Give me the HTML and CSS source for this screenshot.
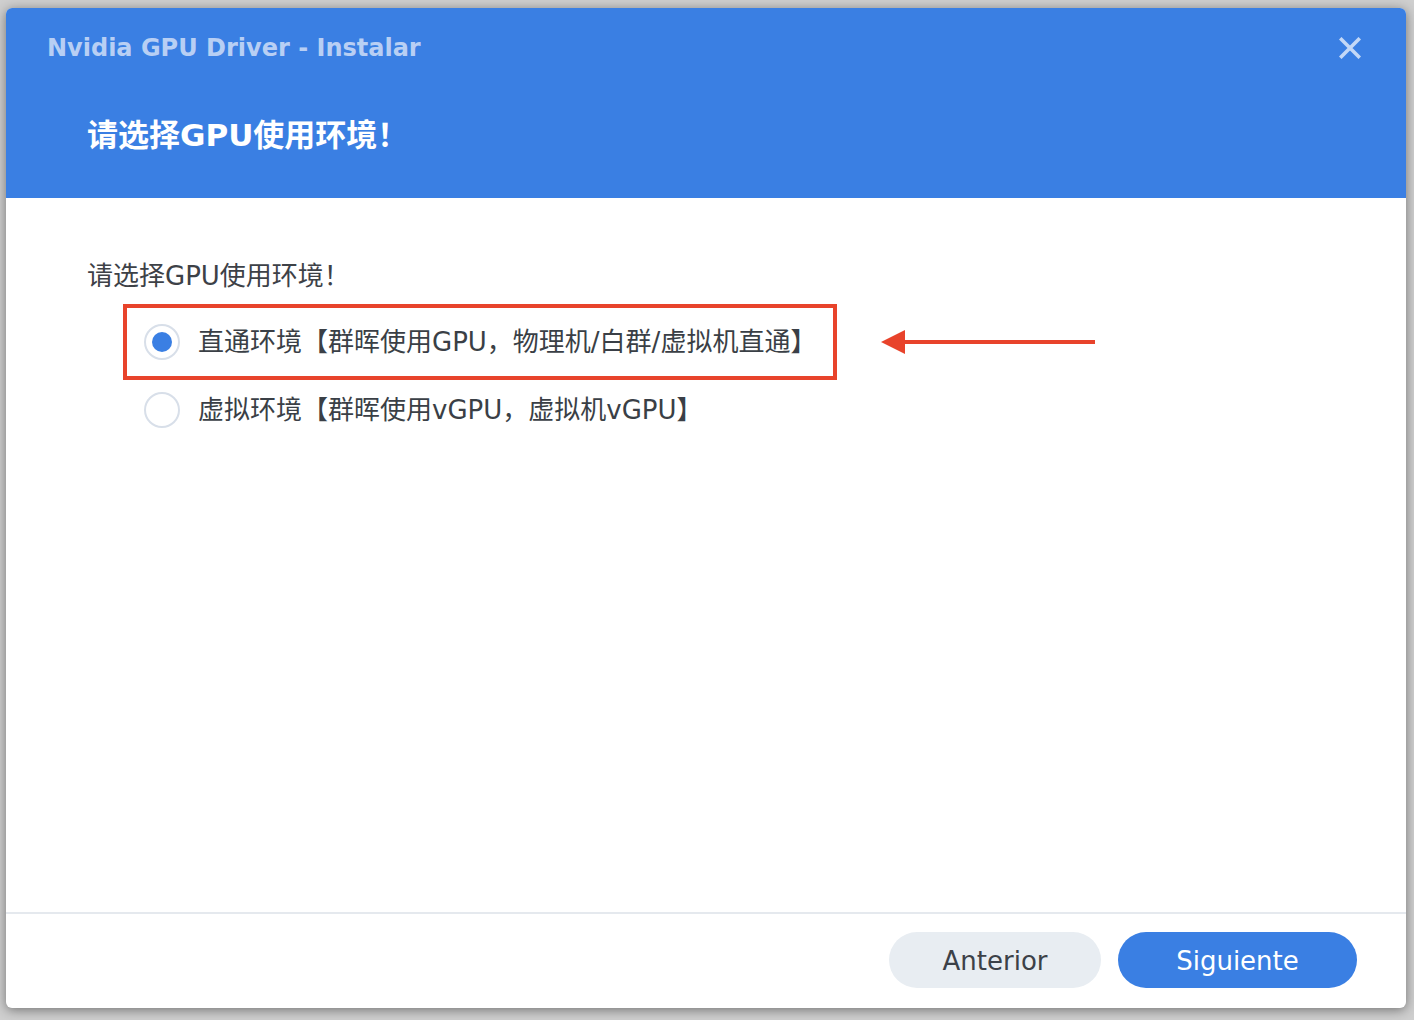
FILE: index.html
```html
<!DOCTYPE html>
<html lang="zh-CN">
<head>
<meta charset="utf-8">
<title>Nvidia GPU Driver - Instalar</title>
<link rel="stylesheet" href="styles.css">
</head>
<body>
<div class="dialog">
  <div class="header">
    <div class="title-row">
      <div class="title">Nvidia GPU Driver - Instalar</div>
      <button class="close" aria-label="close">
        <svg width="22" height="22" viewBox="0 0 22 22"><path d="M2.5 2.5 L19.5 19.5 M19.5 2.5 L2.5 19.5" stroke="#c3d8f7" stroke-width="3.6" stroke-linecap="square" fill="none"/></svg>
      </button>
    </div>
    <div class="heading">请选择GPU使用环境！</div>
  </div>
  <div class="body">
    <div class="label">请选择GPU使用环境！</div>
    <div class="marked-row">
      <div class="highlight">
        <div class="option">
          <span class="radio checked"><span class="dot"></span></span>
          <span class="opt-text">直通环境【群晖使用GPU，物理机/白群/虚拟机直通】</span>
        </div>
      </div>
      <svg class="arrow" width="216" height="26" viewBox="0 0 216 26"><polygon points="0,13 24,1 24,25" fill="#e8432b"/><rect x="22" y="11" width="192" height="4" fill="#e8432b"/></svg>
    </div>
    <div class="option second">
      <span class="radio"></span>
      <span class="opt-text">虚拟环境【群晖使用vGPU，虚拟机vGPU】</span>
    </div>
  </div>
  <div class="footer">
    <button class="btn btn-prev">Anterior</button>
    <button class="btn btn-next">Siguiente</button>
  </div>
</div>
</body>
</html>
```
FILE: styles.css
```css
* { box-sizing: border-box; }
html, body { margin: 0; padding: 0; }
body {
  width: 1414px;
  height: 1020px;
  overflow: hidden;
  background: #cfcfcf;
  font-family: "DejaVu Sans", "Noto Sans CJK SC", sans-serif;
}
.dialog {
  margin: 8px 0 0 6px;
  width: 1400px;
  height: 1000px;
  background: #ffffff;
  border-radius: 6px;
  overflow: hidden;
  display: flex;
  flex-direction: column;
  box-shadow: 0 2px 12px rgba(0, 0, 0, 0.45);
}
.header {
  height: 190px;
  flex: none;
  background: #3a7fe3;
  padding-top: 26px;
}
.title-row {
  display: flex;
  align-items: center;
  justify-content: space-between;
  height: 28px;
  padding: 0 45px 0 41px;
}
.title {
  font-family: "DejaVu Sans", sans-serif;
  font-weight: bold;
  font-size: 24px;
  line-height: 28px;
  color: #b8cff4;
}
.close {
  border: 0;
  background: none;
  padding: 0;
  width: 22px;
  height: 22px;
  display: block;
}
.close svg { display: block; }
.heading {
  margin-top: 53px;
  padding-left: 81px;
  font-family: "DejaVu Sans", "Noto Sans CJK SC", sans-serif;
  font-weight: bold;
  font-size: 31px;
  line-height: 40px;
  color: #ffffff;
}
.body {
  flex: 1;
  padding: 62px 0 0 81px;
}
.label {
  font-size: 26px;
  line-height: 32px;
  color: #3d4147;
}
.marked-row {
  display: flex;
  align-items: center;
  margin-top: 12px;
  margin-left: 36px;
}
.highlight {
  border: 4px solid #e8432b;
  height: 76px;
  display: flex;
  align-items: center;
  padding: 0 17px 0 17px;
}
.arrow {
  display: block;
  margin-left: 44px;
}
.option {
  display: flex;
  align-items: center;
  gap: 18px;
}
.option.second {
  margin-top: 12px;
  margin-left: 57px;
}
.radio {
  width: 36px;
  height: 36px;
  border-radius: 50%;
  border: 2px solid #d8dfe9;
  background: #ffffff;
  display: flex;
  align-items: center;
  justify-content: center;
  flex: none;
}
.dot {
  width: 20px;
  height: 20px;
  border-radius: 50%;
  background: #3a7fe3;
}
.opt-text {
  font-size: 26px;
  line-height: 36px;
  color: #3a3f46;
  white-space: nowrap;
}
.footer {
  flex: none;
  height: 96px;
  border-top: 2px solid #e5e9ee;
  display: flex;
  justify-content: flex-end;
  align-items: flex-start;
  padding: 18px 49px 0 0;
  gap: 17px;
}
.btn {
  height: 56px;
  border: 0;
  border-radius: 28px;
  font-family: "DejaVu Sans", sans-serif;
  font-size: 26px;
  line-height: 58px;
  padding: 0;
  text-align: center;
}
.btn-prev {
  width: 212px;
  background: #e8edf2;
  color: #3c4148;
}
.btn-next {
  width: 239px;
  background: #3a7fe3;
  color: #ffffff;
}
```
